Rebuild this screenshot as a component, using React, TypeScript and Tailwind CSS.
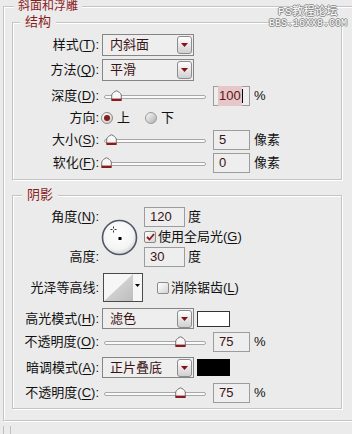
import React from "react";

const U = ({ c }: { c: string }) => (
  <span className="underline decoration-1 underline-offset-[2px]">{c}</span>
);

function Label({ children }: { children: React.ReactNode }) {
  return (
    <div className="w-[86px] shrink-0 whitespace-nowrap text-right text-[13px] leading-[16px] text-[#111]">
      {children}
    </div>
  );
}

function Arrow() {
  return (
    <div className="flex h-[18px] w-[15px] items-center justify-center rounded-[3px] border border-[#8c8c8c] bg-linear-to-b from-[#ffffff] to-[#d0d0d0]">
      <svg width="7" height="4" viewBox="0 0 7 4">
        <path d="M0 0H7L3.5 4Z" fill="#8b0f14" />
      </svg>
    </div>
  );
}

function Select({ value, tall }: { value: string; tall?: boolean }) {
  return (
    <div
      className={
        tall
          ? "ml-[3px] flex h-[22px] w-[92px] shrink-0 items-center justify-between border border-[#858585] bg-[#eeeeee] pl-[7px] pr-[1px]"
          : "ml-[3px] flex h-[21px] w-[92px] shrink-0 items-center justify-between border border-[#858585] bg-[#eeeeee] pl-[7px] pr-[1px]"
      }
    >
      <span className="text-[13px] leading-[16px] text-[#3a1414]">{value}</span>
      <Arrow />
    </div>
  );
}

function Slider({ pos }: { pos: number }) {
  return (
    <div className="relative ml-[3px] h-[14px] w-[106px] shrink-0">
      <div className="absolute left-[2px] right-[2px] top-[6px] h-[4px] rounded-full border border-[#a8a8a8] bg-[#fafafa]" />
      <svg
        className="absolute top-[1px]"
        style={{ left: pos - 102 - 5.5 }}
        width="11"
        height="12"
        viewBox="0 0 11 12"
      >
        <path
          d="M5.5 0.8 C7.5 1.5 9.8 3.2 10.3 5 V10.5 H0.7 V5 C1.2 3.2 3.5 1.5 5.5 0.8Z"
          fill="#f7f7f7"
          stroke="#6e6262"
          strokeWidth="0.9"
        />
        <rect x="0.6" y="8.6" width="9.8" height="2.4" fill="#8b1a1a" />
      </svg>
    </div>
  );
}

function Field({ value, wide, ml }: { value: string; wide?: boolean; ml?: boolean }) {
  return (
    <div
      className={
        wide
          ? "flex h-[20px] w-[41px] shrink-0 items-center border border-[#9c9c9c] bg-[#eeeeee] pl-[5px] text-[13px] text-[#3a1414]"
          : ml
          ? "ml-[5px] flex h-[20px] w-[37px] shrink-0 items-center border border-[#9c9c9c] bg-[#eeeeee] pl-[5px] text-[13px] text-[#3a1414]"
          : "flex h-[20px] w-[37px] shrink-0 items-center border border-[#9c9c9c] bg-[#eeeeee] pl-[5px] text-[13px] text-[#3a1414]"
      }
    >
      {value}
    </div>
  );
}

function Check() {
  return (
    <div className="flex h-[12px] w-[12px] shrink-0 items-center justify-center rounded-[2px] border border-[#8a8a8a] bg-linear-to-br from-[#ffffff] to-[#d4d4d4]">
      <svg width="9" height="8" viewBox="0 0 9 8">
        <path d="M1 4 L3.5 6.5 L8 1" fill="none" stroke="#8b1a1a" strokeWidth="1.8" />
      </svg>
    </div>
  );
}

function Box() {
  return (
    <div className="h-[12px] w-[12px] shrink-0 rounded-[2px] border border-[#8a8a8a] bg-linear-to-br from-[#ffffff] to-[#d4d4d4]" />
  );
}

function Dial() {
  return (
    <svg width="37" height="37" viewBox="0 0 37 37" className="ml-[2px] self-center">
      <defs>
        <radialGradient id="dg" cx="0.45" cy="0.4" r="0.6">
          <stop offset="0" stopColor="#ffffff" />
          <stop offset="0.75" stopColor="#f4f4f4" />
          <stop offset="1" stopColor="#d6d6d6" />
        </radialGradient>
      </defs>
      <circle cx="18.5" cy="18.5" r="17" fill="url(#dg)" stroke="#4f5668" strokeWidth="1.6" />
      <rect x="17.5" y="18" width="3" height="3" fill="#000" />
      <g stroke="#333" strokeWidth="1">
        <path d="M9.5 10.5 H11.5 M13.5 10.5 H15.5" />
        <path d="M12.5 7.5 V9.5 M12.5 11.5 V13.5" />
      </g>
    </svg>
  );
}

export default function App() {
  return (
    <div className="relative h-[434px] w-[352px] overflow-hidden bg-[#ebebeb] pl-[3px] [font-family:'Liberation_Sans','Noto_Sans_CJK_SC',sans-serif]">
      <fieldset className="w-[420px] border border-[#c4c4c4] pb-[11px] pl-[8px] shadow-[inset_1px_1px_0_#fff,1px_1px_0_#fff]">
        <legend className="ml-[2px] bg-[#ebebeb] px-[4px] text-[12px] leading-[12px] text-[#8a1c1c]">
          斜面和浮雕
        </legend>

        {/* 结构 */}
        <fieldset className="mt-[3px] w-[330px] border border-[#c4c4c4] pb-[6px] shadow-[inset_1px_1px_0_#fff,1px_1px_0_#fff]">
          <legend className="ml-[7px] bg-[#ebebeb] px-[5px] text-[13px] leading-[14px] text-[#8a1c1c]">
            结构
          </legend>
          <div className="flex flex-col pt-[5px]">
            <div className="flex h-[22px] items-center">
              <Label>
                样式(<U c="T" />):
              </Label>
              <Select value="内斜面" tall />
            </div>
            <div className="mt-[3px] flex h-[22px] items-center">
              <Label>
                方法(<U c="Q" />):
              </Label>
              <Select value="平滑" tall />
            </div>
            <div className="mt-[5px] flex h-[20px] items-center">
              <Label>
                深度(<U c="D" />):
              </Label>
              <Slider pos={116} />
              <div className="ml-[5px] flex h-[20px] w-[37px] shrink-0 items-center border border-[#9c9c9c] bg-[#eeeeee] pl-[4px] text-[13px] text-[#5a1616]">
                <span className="bg-[#e6c6c8] px-[1px]">100</span>
                <span className="h-[14px] w-px bg-black" />
              </div>
              <span className="ml-[4px] text-[13px] text-[#111]">%</span>
            </div>
            <div className="mt-[2px] flex h-[20px] items-center">
              <Label>方向:</Label>
              <div className="ml-[2px] flex h-[12px] w-[12px] shrink-0 items-center justify-center rounded-full border border-[#8a8a8a] bg-linear-to-br from-[#ffffff] to-[#c8c8c8]">
                <div className="h-[6px] w-[6px] rounded-full bg-[#8b1a1a]" />
              </div>
              <span className="ml-[4px] text-[13px] text-[#111]">上</span>
              <div className="ml-[15px] h-[12px] w-[12px] shrink-0 rounded-full border border-[#9a9a9a] bg-linear-to-br from-[#fbfbfb] to-[#b0b0b0]" />
              <span className="ml-[4px] text-[13px] text-[#111]">下</span>
            </div>
            <div className="mt-[2px] flex h-[20px] items-center">
              <Label>
                大小(<U c="S" />):
              </Label>
              <Slider pos={111} />
              <Field value="5" ml />
              <span className="ml-[4px] text-[13px] text-[#111]">像素</span>
            </div>
            <div className="mt-[3px] flex h-[20px] items-center">
              <Label>
                软化(<U c="F" />):
              </Label>
              <Slider pos={106} />
              <Field value="0" ml />
              <span className="ml-[4px] text-[13px] text-[#111]">像素</span>
            </div>
          </div>
        </fieldset>

        {/* 阴影 */}
        <fieldset className="mt-[8px] w-[330px] border border-[#c4c4c4] pb-[5px] shadow-[inset_1px_1px_0_#fff,1px_1px_0_#fff]">
          <legend className="ml-[9px] bg-[#ebebeb] px-[5px] text-[13px] leading-[14px] text-[#8a1c1c]">
            阴影
          </legend>
          <div className="flex flex-col pt-[5px]">
            <div className="grid grid-cols-[86px_45px_auto] grid-rows-[20px_20px_20px]">
              <div className="col-start-1 row-start-1 flex items-center">
                <Label>
                  角度(<U c="N" />):
                </Label>
              </div>
              <div className="col-start-2 row-span-3 row-start-1 flex items-center">
                <Dial />
              </div>
              <div className="col-start-3 row-start-1 flex items-center">
                <Field value="120" wide />
                <span className="ml-[3px] text-[13px] text-[#111]">度</span>
              </div>
              <div className="col-start-3 row-start-2 flex items-center">
                <Check />
                <span className="ml-[2px] whitespace-nowrap text-[13px] text-[#111]">
                  使用全局光(<U c="G" />)
                </span>
              </div>
              <div className="col-start-1 row-start-3 flex items-center">
                <Label>高度:</Label>
              </div>
              <div className="col-start-3 row-start-3 flex items-center">
                <Field value="30" wide />
                <span className="ml-[3px] text-[13px] text-[#111]">度</span>
              </div>
            </div>

            <div className="mt-[6px] flex h-[29px] items-center">
              <Label>光泽等高线:</Label>
              <div className="ml-[4px] flex h-[29px] w-[40px] shrink-0 border border-[#4a4a4a] bg-[#f6f6f6]">
                <svg width="29" height="27" viewBox="0 0 29 27">
                  <defs>
                    <linearGradient id="cg" x1="0" y1="0" x2="1" y2="1">
                      <stop offset="0" stopColor="#e2e2e2" />
                      <stop offset="1" stopColor="#bdbdbd" />
                    </linearGradient>
                  </defs>
                  <path d="M0 27 L29 0 V27 Z" fill="url(#cg)" />
                </svg>
                <div className="flex flex-1 justify-center pt-[10px]">
                  <svg width="5" height="3" viewBox="0 0 5 3">
                    <path d="M0 0H5L2.5 3Z" fill="#000" />
                  </svg>
                </div>
              </div>
              <div className="ml-[14px] flex items-center">
                <Box />
                <span className="ml-[2px] whitespace-nowrap text-[13px] text-[#111]">
                  消除锯齿(<U c="L" />)
                </span>
              </div>
            </div>

            <div className="mt-[6px] flex h-[21px] items-center">
              <Label>
                高光模式(<U c="H" />):
              </Label>
              <Select value="滤色" />
              <div className="ml-[3px] h-[16px] w-[33px] shrink-0 border border-[#333] bg-white" />
            </div>

            <div className="mt-[3px] flex h-[20px] items-center">
              <Label>
                不透明度(<U c="O" />):
              </Label>
              <Slider pos={180} />
              <Field value="75" ml />
              <span className="ml-[4px] text-[13px] text-[#111]">%</span>
            </div>

            <div className="mt-[5px] flex h-[21px] items-center">
              <Label>
                暗调模式(<U c="A" />):
              </Label>
              <Select value="正片叠底" />
              <div className="ml-[3px] h-[17px] w-[33px] shrink-0 bg-black" />
            </div>

            <div className="mt-[5px] flex h-[20px] items-center">
              <Label>
                不透明度(<U c="C" />):
              </Label>
              <Slider pos={180} />
              <Field value="75" ml />
              <span className="ml-[4px] text-[13px] text-[#111]">%</span>
            </div>
          </div>
        </fieldset>
      </fieldset>

      <div className="mt-[5px] flex gap-[6px]">
        <div className="h-[8px] w-px bg-[#c0c0c0]" />
        <div className="h-[8px] w-px bg-[#c0c0c0]" />
      </div>

      <div className="absolute left-[266px] top-[6px] w-[84px] text-center leading-[12px] text-white [font-family:'Liberation_Mono','Noto_Sans_CJK_SC',monospace] [text-shadow:1px_0_#8a8a8a,-1px_0_#8a8a8a,0_1px_#8a8a8a,0_-1px_#8a8a8a]">
        <div className="text-[11px] tracking-[0.5px]">PS教程论坛</div>
        <div className="text-[10px]">BBS.16XX8.COM</div>
      </div>
    </div>
  );
}
